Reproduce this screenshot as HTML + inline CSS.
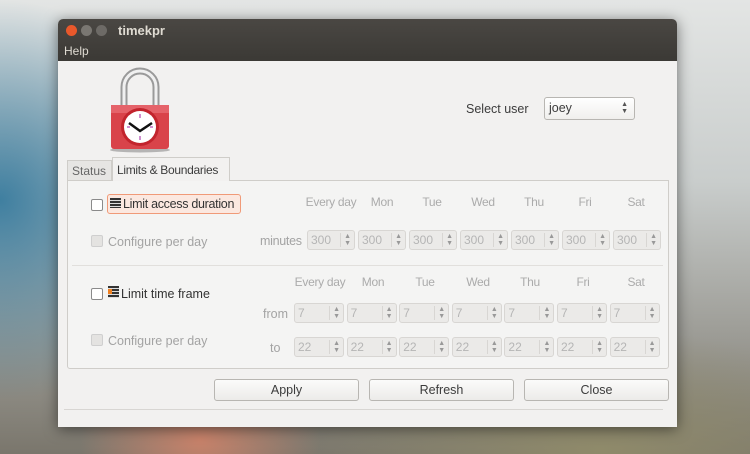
<!DOCTYPE html>
<html><head><meta charset="utf-8"><style>
*{box-sizing:border-box;margin:0;padding:0}
body{width:750px;height:454px;overflow:hidden;position:relative;font-family:"Liberation Sans",sans-serif;font-size:12px;color:#3c3c3c;white-space:nowrap;
background:
radial-gradient(ellipse 120px 80px at 200px 440px,#c8826a 0%,rgba(200,130,106,0) 100%),
radial-gradient(ellipse 200px 200px at 0px 200px,#3f7fa0 0%,rgba(63,127,160,0) 100%),
radial-gradient(ellipse 300px 120px at 600px 450px,#8f8a6a 0%,rgba(143,138,106,0) 100%),
linear-gradient(180deg,#e3e5e4 0%,#c9cdcc 40%,#7a766c 100%);}
.a{position:absolute}
.win{left:58px;top:19px;width:619px;height:408px;background:#f2f1f0;box-shadow:0 2px 14px rgba(0,0,0,.5);border-radius:5px 5px 0 0;overflow:hidden}
.tb{left:0;top:0;width:619px;height:42px;background:linear-gradient(#4a4743,#3b3935)}
.cb{width:11px;height:11px;border-radius:50%;top:6px}
.lbl{color:#a3a3a3}
.hd{color:#ababab;text-align:center;width:50px}
.spin{height:20px;border:1px solid #d8d6d3;border-radius:3px;background:#ebeae8;color:#b5b5b5;font-size:12px;padding:2px 0 0 3px}
.spin:after{content:"";position:absolute;right:13px;top:2px;bottom:2px;border-left:1px solid #d8d6d3}
.spin i{position:absolute;right:3px;top:2px;font-style:normal;font-size:7px;line-height:7px;color:#999}
.chk{width:12px;height:12px;border:1px solid #8a8a8a;border-radius:2px;background:#fff}
.chkd{width:12px;height:12px;border:1px solid #cfcfcf;border-radius:2px;background:#e4e3e1}
.btn{top:360px;width:145px;height:22px;border:1px solid #b8b6b2;border-radius:3px;background:linear-gradient(#fbfbfa,#ecebe9);text-align:center;line-height:20px;font-size:12.5px;color:#3c3c3c}
</style></head><body>
<div class="a win">
 <div class="a tb"></div>
 <div class="a cb" style="left:8px;background:#e9582b"></div>
 <div class="a cb" style="left:23px;background:#7a7772"></div>
 <div class="a cb" style="left:38px;background:#6d6a66"></div>
 <div class="a" style="left:60px;top:4px;color:#dfdbd2;font-weight:bold;font-size:13px">timekpr</div>
 <div class="a" style="left:6px;top:25px;color:#dfdbd2;font-size:12px">Help</div>
 <!-- lock -->
 <svg class="a" style="left:46px;top:48px" width="72" height="86" viewBox="0 0 72 86">
  <ellipse cx="36" cy="83" rx="30" ry="2.5" fill="#000" opacity=".25"/>
  <path d="M20 42 V20 A16 16 0 0 1 52 20 V42" fill="none" stroke="#9a9a9a" stroke-width="7"/>
  <path d="M20 42 V20 A16 16 0 0 1 52 20 V42" fill="none" stroke="#f0f0f0" stroke-width="3"/>
  <rect x="7" y="38" width="58" height="44" rx="3" fill="#d9434a"/>
  <rect x="7" y="38" width="58" height="8" fill="#e5636a"/>
  <circle cx="36" cy="60" r="19" fill="#c2242d"/>
  <circle cx="36" cy="60" r="16" fill="#fff"/>
  <path d="M25 56 L36 64 L48 56" fill="none" stroke="#111" stroke-width="2.5"/>
  <path d="M36 47v4M36 69v4M23 60h3M46 60h3" stroke="#a020a0" stroke-width="1"/>
 </svg>
 <div class="a" style="left:408px;top:83px;font-size:12.5px">Select user</div>
 <div class="a" style="left:486px;top:78px;width:91px;height:23px;border:1px solid #b8b6b2;border-radius:3px;background:linear-gradient(#fff,#f0efed);padding:3px 0 0 4px;font-size:12.5px">joey<span class="a" style="right:6px;top:3px;font-size:7px;line-height:7px;color:#555">▲<br>▼</span></div>
 <!-- tabs -->
 <div class="a" style="left:9px;top:141px;width:45px;height:21px;border:1px solid #cfcdc9;background:#e6e5e3;padding:3px 0 0 4px;color:#666;font-size:12px">Status</div>
 <div class="a" style="left:54px;top:138px;width:118px;height:24px;border:1px solid #cfcdc9;border-bottom:none;background:#f2f1f0;padding:5px 0 0 4px;font-size:12px;letter-spacing:-0.3px;z-index:2">Limits &amp; Boundaries</div>
 <div class="a" style="left:9px;top:161px;width:602px;height:189px;border:1px solid #cfcdc9;border-radius:0 0 3px 3px;background:#f4f4f3"></div>
 <div class="a" style="left:14px;top:246px;width:591px;height:1px;background:#e1dfdc"></div>
 <!-- row 1 -->
 <div class="a chk" style="left:33px;top:180px"></div>
 <div class="a" style="left:49px;top:175px;width:134px;height:20px;border:1px solid #f09a78;border-radius:3px;background:#fbe8e0"></div>
 <div class="a" style="left:52px;top:179px;width:11px;height:10px;background:repeating-linear-gradient(#333 0 2px,#ddd 2px 3px)"></div>
 <div class="a" style="left:65px;top:178px;font-size:12.5px;color:#333;letter-spacing:-0.3px">Limit access duration</div>
 <div class="a chkd" style="left:33px;top:216px"></div>
 <div class="a lbl" style="left:50px;top:216px;font-size:12.5px">Configure per day</div>
 <div class="a lbl" style="left:202px;top:215px;font-size:12.5px;letter-spacing:-0.3px">minutes</div>
 <!-- row 2 -->
 <div class="a chk" style="left:33px;top:269px"></div>
 <div class="a" style="left:50px;top:267px;width:11px;height:12px;background:repeating-linear-gradient(#333 0 2px,#ddd 2px 3px)"></div>
 <div class="a" style="left:50px;top:270px;width:4px;height:5px;background:#f08020"></div>
 <div class="a" style="left:63px;top:268px;font-size:12.5px;color:#333">Limit time frame</div>
 <div class="a chkd" style="left:33px;top:315px"></div>
 <div class="a lbl" style="left:50px;top:315px;font-size:12.5px">Configure per day</div>
 <div class="a lbl" style="left:205px;top:288px;font-size:12.5px">from</div>
 <div class="a lbl" style="left:212px;top:322px;font-size:12.5px">to</div>
 <div id="g"></div>
 <div class="a btn" style="left:156px">Apply</div>
 <div class="a btn" style="left:311px">Refresh</div>
 <div class="a btn" style="left:466px">Close</div>
 <div class="a" style="left:6px;top:390px;width:599px;height:1px;background:#d8d6d3"></div>
</div>
<script>
var w=document.querySelector('.win'),h='';
var d=['Every day','Mon','Tue','Wed','Thu','Fri','Sat'];
var c1=[331,382,432,483,534,585,636],c2=[320,373,425,478,530,583,636];
for(var i=0;i<7;i++){
 h+='<div class="a hd" style="left:'+(c1[i]-58-30)+'px;top:176px;width:60px;font-size:12px;letter-spacing:-0.3px">'+d[i]+'</div>';
 h+='<div class="a hd" style="left:'+(c2[i]-58-30)+'px;top:256px;width:60px;font-size:12px;letter-spacing:-0.3px">'+d[i]+'</div>';
 var x1=307-58+i*51;
 h+='<div class="a spin" style="left:'+x1+'px;top:211px;width:48px">300<i>▲<br>▼</i></div>';
 var x2=294-58+i*52.6;
 h+='<div class="a spin" style="left:'+x2+'px;top:284px;width:50px">7<i>▲<br>▼</i></div>';
 h+='<div class="a spin" style="left:'+x2+'px;top:318px;width:50px">22<i>▲<br>▼</i></div>';
}
document.getElementById('g').outerHTML=h;
</script>
</body></html>
